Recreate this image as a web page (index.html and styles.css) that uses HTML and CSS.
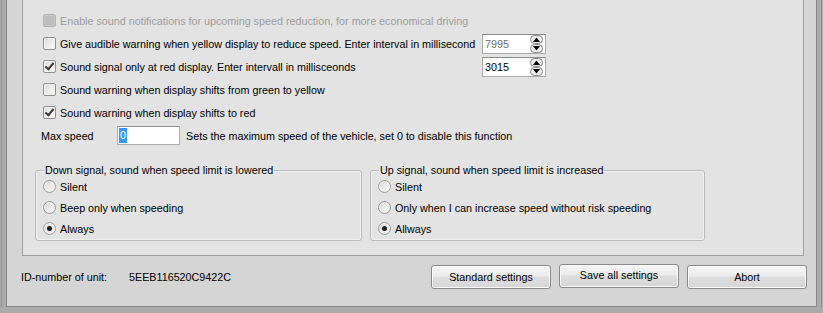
FILE: index.html
```html
<!DOCTYPE html>
<html lang="en">
<head>
  <meta charset="UTF-8">
  <title>Sound settings</title>
  <link rel="stylesheet" href="styles.css">
</head>
<body>
  <div class="dialog">
    <div class="panel">
      <div class="opt disabled"><span class="check"></span>Enable sound notifications for upcoming speed reduction, for more economical driving</div>

      <div class="opt-row">
        <div class="opt wide"><span class="check"></span>Give audible warning when yellow display to reduce speed. Enter interval in millisecond</div>
        <div class="spin dim">
          <span class="spin-val">7995</span>
          <svg class="arrows" width="15" height="18" viewBox="0 0 15 18">
            <rect x="1.5" y="0.5" width="12" height="8" rx="4" fill="#ededed" stroke="#8a8a8a"/>
            <rect x="1.5" y="9.5" width="12" height="8" rx="4" fill="#ededed" stroke="#8a8a8a"/>
            <path d="M4 7 L7.5 2.5 L11 7 Z" fill="#000"/>
            <path d="M4 11 L7.5 15.5 L11 11 Z" fill="#000"/>
          </svg>
        </div>
      </div>

      <div class="opt-row">
        <div class="opt wide"><span class="check on"></span>Sound signal only at red display. Enter intervall in millisceonds</div>
        <div class="spin">
          <span class="spin-val">3015</span>
          <svg class="arrows" width="15" height="18" viewBox="0 0 15 18">
            <rect x="1.5" y="0.5" width="12" height="8" rx="4" fill="#ededed" stroke="#8a8a8a"/>
            <rect x="1.5" y="9.5" width="12" height="8" rx="4" fill="#ededed" stroke="#8a8a8a"/>
            <path d="M4 7 L7.5 2.5 L11 7 Z" fill="#000"/>
            <path d="M4 11 L7.5 15.5 L11 11 Z" fill="#000"/>
          </svg>
        </div>
      </div>

      <div class="opt"><span class="check"></span>Sound warning when display shifts from green to yellow</div>
      <div class="opt"><span class="check on"></span>Sound warning when display shifts to red</div>

      <div class="max-row">
        <span class="max-label">Max speed</span>
        <div class="field"><span class="sel">0</span></div>
        <span>Sets the maximum speed of the vehicle, set 0 to disable this function</span>
      </div>

      <div class="groups">
        <fieldset class="group left">
          <legend>Down signal, sound when speed limit is lowered</legend>
          <div class="radio-row"><span class="radio"></span>Silent</div>
          <div class="radio-row"><span class="radio"></span>Beep only when speeding</div>
          <div class="radio-row"><span class="radio on"></span>Always</div>
        </fieldset>
        <fieldset class="group right">
          <legend>Up signal, sound when speed limit is increased</legend>
          <div class="radio-row"><span class="radio"></span>Silent</div>
          <div class="radio-row"><span class="radio"></span>Only when I can increase speed without risk speeding</div>
          <div class="radio-row"><span class="radio on"></span>Allways</div>
        </fieldset>
      </div>
    </div>

    <div class="footer">
      <span class="id-label">ID-number of unit:</span>
      <span class="id-value">5EEB116520C9422C</span>
      <div class="buttons">
        <button class="btn">Standard settings</button>
        <button class="btn raised">Save all settings</button>
        <button class="btn">Abort</button>
      </div>
    </div>
  </div>
</body>
</html>
```

FILE: styles.css
```css
body {
  margin: 0;
  background-color: #ababab;
  font-family: "Liberation Sans", Arial, sans-serif;
  font-size: 10.75px;
  color: #000;
  white-space: nowrap;
}

/* ventana */
.dialog {
  margin-left: 6px;
  width: 809px;
  height: 306px;
  background-color: #d5d5d5;
  border: 1px solid #868686;
  border-top: none;
  box-shadow: 0 0 0 4px #ababab, 0 0 0 5px #8f8f8f;
}

.panel {
  margin-left: 15px;
  width: 782px;
  height: 256px;
  box-sizing: border-box;
  background-color: #e3e3e3;
  border: 1px solid #a0a0a0;
  border-top: none;
  padding-top: 9px;
}

/* casillas */
.opt {
  height: 23px;
  display: flex;
  align-items: center;
  gap: 4px;
  margin-left: 20px;
}

.opt.disabled {
  color: #9c9c9c;
}

.opt-row {
  display: flex;
  align-items: center;
}

.opt.wide {
  width: 439px;
}

.check {
  width: 11px;
  height: 11px;
  border: 1px solid #8e8f8f;
  border-radius: 2px;
  background: linear-gradient(135deg, #dcdcdc, #fbfbfb);
  box-shadow: inset 0 0 0 1px #f4f4f4;
  position: relative;
  flex: none;
}

.opt.disabled .check {
  background: #bdbdbd;
  border-color: #b3b3b3;
  box-shadow: inset 0 0 0 1px #c8c8c8;
}

.check.on::after {
  content: "";
  position: absolute;
  left: 3px;
  top: 0px;
  width: 3px;
  height: 7px;
  border: solid #3a3a3a;
  border-width: 0 2px 2px 0;
  transform: rotate(40deg);
}

/* spinbox */
.spin {
  width: 61px;
  height: 18px;
  background-color: #fff;
  border: 1px solid #adadad;
  border-top-color: #8c8c8c;
  display: flex;
  align-items: center;
  justify-content: space-between;
  padding-right: 1px;
}

.spin-val {
  padding-left: 2px;
}

.spin.dim .spin-val {
  color: #6d6d6d;
}

/* velocidad maxima */
.max-row {
  height: 23px;
  display: flex;
  align-items: center;
  margin-left: 18px;
}

.max-label {
  width: 76px;
}

.field {
  width: 61px;
  height: 17px;
  background-color: #fff;
  border: 1px solid #adadad;
  border-top-color: #8c8c8c;
  display: flex;
  align-items: center;
  margin-right: 6px;
}

.sel {
  margin-left: 1px;
  background-color: #3399ff;
  color: #fff;
  padding: 1px 1px;
  line-height: 13px;
}

/* grupos */
.groups {
  display: flex;
  gap: 8px;
  margin-left: 12px;
  margin-top: 17px;
}

.group {
  margin: 0;
  padding: 0 0 1px 7px;
  border: 1px solid #b9b9b9;
  border-radius: 3px;
  box-shadow: inset 0 0 0 1px #f0f0f0;
  box-sizing: border-box;
}

.group.left {
  width: 327px;
}

.group.right {
  width: 335px;
}

.group legend {
  padding: 0 1px;
  margin-left: 1px;
  margin-bottom: -1px;
  line-height: 13px;
}

.radio-row {
  height: 21px;
  display: flex;
  align-items: center;
  gap: 4px;
}

.radio {
  width: 11px;
  height: 11px;
  border: 1px solid #9a9a9a;
  border-radius: 50%;
  background: linear-gradient(135deg, #d8d8d8, #fbfbfb);
  box-shadow: inset 0 0 0 1px #f2f2f2;
  position: relative;
  flex: none;
}

.radio.on::after {
  content: "";
  position: absolute;
  left: 3px;
  top: 3px;
  width: 5px;
  height: 5px;
  border-radius: 50%;
  background-color: #1f1f1f;
}

/* pie */
.footer {
  display: flex;
  align-items: center;
  height: 24px;
  margin-top: 9px;
  padding-left: 14px;
}

.id-label {
  width: 108px;
}

.buttons {
  margin-left: auto;
  margin-right: 9px;
  display: flex;
  gap: 8px;
  align-items: center;
}

.btn {
  width: 120px;
  height: 24px;
  font-family: "Liberation Sans", Arial, sans-serif;
  font-size: 10.75px;
  color: #000;
  border: 1px solid #8a8a8a;
  border-radius: 3px;
  background: linear-gradient(#f6f6f6 0%, #ececec 45%, #dedede 50%, #d6d6d6 100%);
  box-shadow: inset 0 0 0 1px #fbfbfb;
  padding: 0;
}

.btn.raised {
  margin-top: -2px;
  padding-bottom: 3px;
}
```
